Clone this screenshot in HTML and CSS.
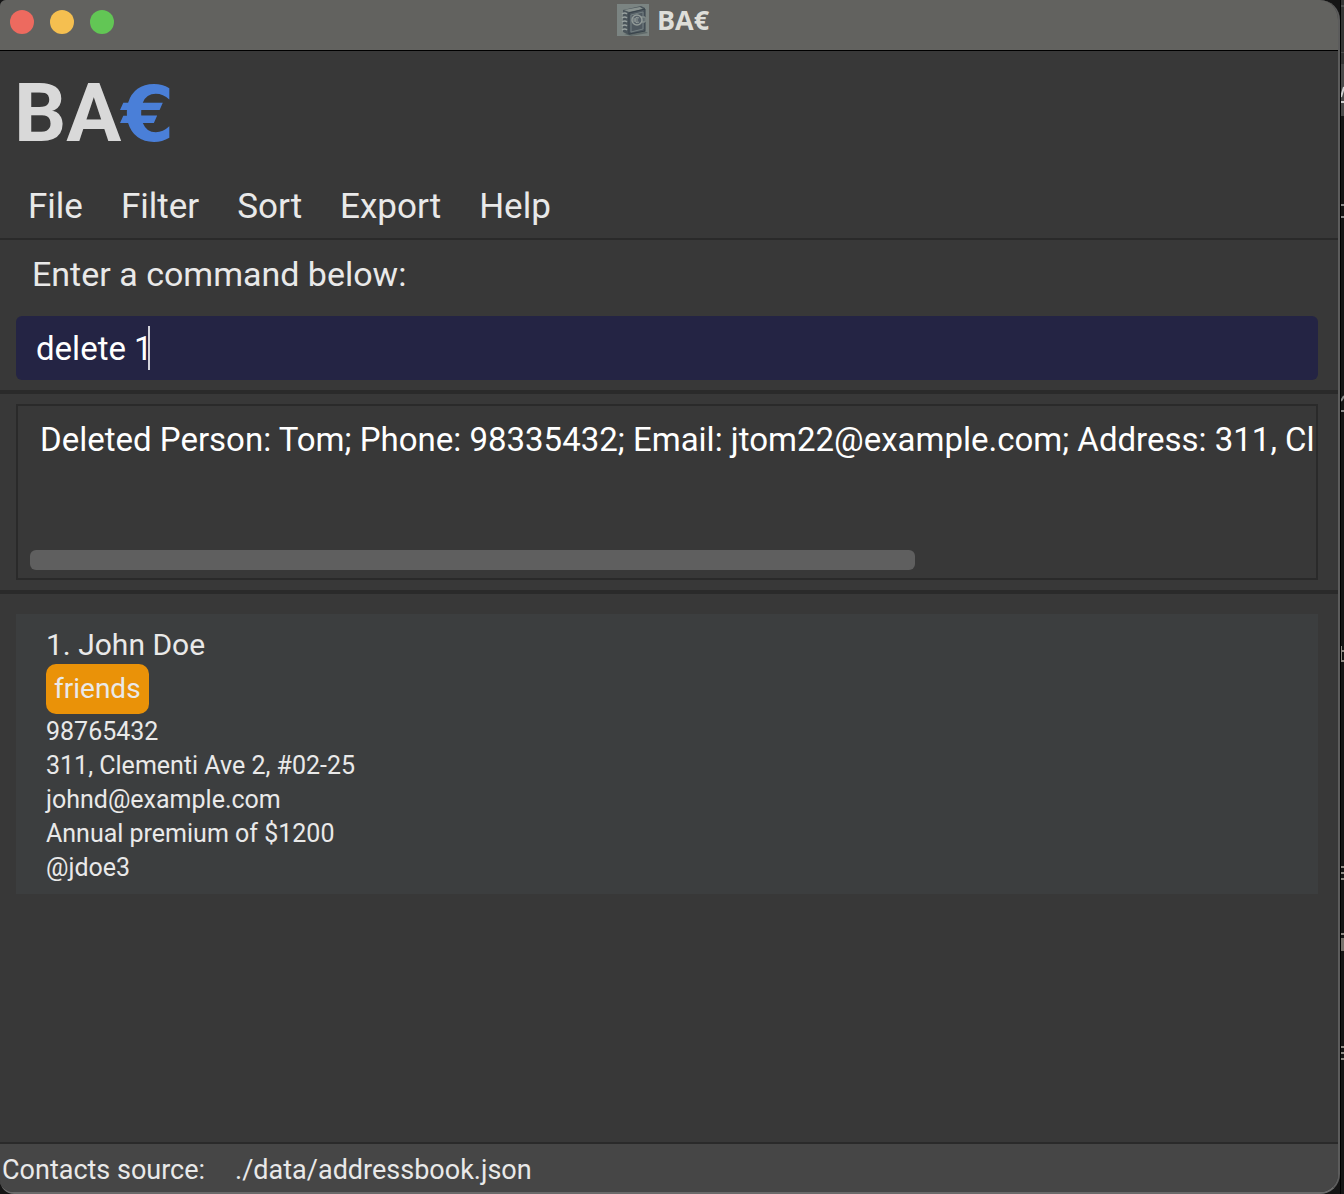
FILE: index.html
```html
<!DOCTYPE html>
<html lang="en">
<head>
<meta charset="utf-8">
<title>BA€</title>
<link rel="stylesheet" href="styles.css">
</head>
<body>
<div class="desktop">
  <div class="window">
    <header class="titlebar">
      <div class="lights">
        <button class="light close" aria-label="Close"></button>
        <button class="light minimise" aria-label="Minimise"></button>
        <button class="light zoom" aria-label="Zoom"></button>
      </div>
      <div class="title">
        <svg class="app-icon" viewBox="0 0 32 32" aria-hidden="true">
          <rect width="32" height="32" fill="#7b8482"/>
          <path d="M7 30 28 27 31 29 14 32Z" fill="#5f6969"/>
          <path d="M6 6 24 2 28 4V27L12 31 6 28Z" fill="#4b555b"/>
          <path d="M7 6 23 3 26 5 12 8Z" fill="#89928f"/>
          <path d="M12 9 28 5V27L12 30Z" fill="#4f5960" stroke="#38434a"/>
          <path d="M14 11 26 8V25L14 28Z" fill="none" stroke="#748082"/>
          <circle cx="20" cy="16" r="5" fill="#566068" stroke="#929b98" stroke-width="1.500"/>
          <path d="M22 14Q18 12 18 16T22 18M16 15H21M16 17H21M24 13H28V18H25" fill="none" stroke="#929b98"/>
          <path d="M5 10Q8 8 10 10M5 14Q8 12 10 14M5 18Q8 16 10 18M5 22Q8 20 10 22M5 26Q8 24 10 26" fill="none" stroke="#98a19f" stroke-width="1.500"/>
        </svg>
        <span>BA€</span>
      </div>
    </header>
    <h1 class="logo">BA<span class="euro">€</span></h1>
    <nav class="menu">
      <button>File</button>
      <button>Filter</button>
      <button>Sort</button>
      <button>Export</button>
      <button>Help</button>
    </nav>
    <section class="command">
      <label for="command">Enter a command below:</label>
      <div class="field">
        <input id="command" type="text" value="delete 1" autocomplete="off" spellcheck="false">
        <span class="caret"></span>
      </div>
    </section>
    <section class="result">
      <div class="result-box">
        <output class="message" for="command">Deleted Person: Tom; Phone: 98335432; Email: jtom22@example.com; Address: 311, Cl</output>
        <div class="track"><div class="thumb"></div></div>
      </div>
    </section>
    <main class="people">
      <article class="card">
        <h2>1. John Doe</h2>
        <span class="tag">friends</span>
        <p>98765432</p>
        <p>311, Clementi Ave 2, #02-25</p>
        <p>johnd@example.com</p>
        <p>Annual premium of $1200</p>
        <p>@jdoe3</p>
      </article>
    </main>
    <footer class="status"><span>Contacts source:</span><span>./data/addressbook.json</span></footer>
  </div>
  <svg class="behind" viewBox="0 0 4 1194" preserveAspectRatio="none" aria-hidden="true">
    <rect width="4" height="1194" fill="#151515"/>
    <rect width="4" height="64" fill="#353535"/>
    <rect y="5" width="4" height="2" fill="#505050"/>
    <rect y="52" width="4" height="1" fill="#505050"/>
    <rect y="64" width="4" height="52" fill="#4a4a4a"/>
    <path d="M1 97 4 87M1 102H4" stroke="#d0d0d0" stroke-width="2"/>
    <path d="M1 205H4M1 217H4M1 401 4 396M1 411H4" stroke="#8a8a8a" stroke-width="2"/>
    <path d="M1 646V662M1 651H4M1 661H4M1 867H4M1 873H4M1 879H4M1 934H4M1 1047H4M1 1053H4M1 1059H4" stroke="#8f8a84" stroke-width="2"/>
    <rect y="938" x="1" width="3" height="13" fill="#77726c"/>
    <rect width="1" height="1194" fill="#000"/>
  </svg>
</div>
</body>
</html>
```
FILE: styles.css
```css
* { box-sizing: border-box; }

body {
  margin: 0;
  background: #151515;
  color: #e9e9e9;
  font-family: Roboto, "Liberation Sans", sans-serif;
}

button, input { font: inherit; color: inherit; border: 0; padding: 0; }
button { background: none; }
h1, h2, p { margin: 0; font-weight: 400; }

.desktop { display: flex; min-height: 100vh; }
.behind { width: 4px; height: 100vh; flex: none; }

.window {
  flex: 1;
  min-width: 0;
  display: flex;
  flex-direction: column;
  background: #383838;
  border-right: 2px solid #5c5c5c;
  border-bottom: 2px solid #6a6a6a;
  border-radius: 6px 20px 20px 14px;
  overflow: hidden;
}

.titlebar {
  display: grid;
  grid-template-columns: 1fr auto 1fr;
  height: 51px;
  padding-right: 12px;
  background: #62625f;
  border-bottom: 1px solid #000;
}
.lights { display: flex; gap: 16px; padding: 10px; }
.light { width: 24px; height: 24px; border-radius: 50%; }
.close { background: #ed6a5f; }
.minimise { background: #f5bf50; }
.zoom { background: #62c655; }
.title {
  display: flex;
  gap: 8px;
  padding-top: 4px;
  font: 700 27px/32px "Open Sans", sans-serif;
  color: #deded9;
}
.app-icon { width: 32px; height: 32px; }

.logo {
  display: flex;
  align-items: baseline;
  height: 108px;
  padding: 14px 14px 0;
  font-weight: 700;
  font-size: 82px;
  line-height: 96px;
  color: #d9d9d9;
}
.euro {
  color: #4a7fd8;
  font-family: "DejaVu Sans", sans-serif;
  font-size: 76px;
}

.menu {
  display: flex;
  gap: 38px;
  margin-top: 15px;
  padding: 9px 28px 7px;
  border-bottom: 2px solid #2a2a2a;
  font-size: 35px;
  line-height: 48px;
}

.command {
  padding: 10px 20px 10px 16px;
  border-bottom: 4px solid #2a2a2a;
}
.command label {
  display: block;
  padding: 0 16px 18px;
  font-size: 34px;
  line-height: 48px;
}
.field { position: relative; }
.field input {
  display: block;
  width: 100%;
  height: 64px;
  padding: 0 20px;
  border-radius: 6px;
  background: #242444;
  color: #fff;
  font-size: 33px;
  caret-color: transparent;
}
.caret {
  position: absolute;
  left: 132px;
  top: 10px;
  width: 2px;
  height: 44px;
  background: #d3d3da;
}

.result { padding: 10px 20px 10px 16px; border-bottom: 4px solid #2a2a2a; }
.result-box {
  display: flex;
  flex-direction: column;
  height: 176px;
  padding: 12px 0 8px 12px;
  border: 2px solid #2a2a2a;
}
.message {
  flex: 1;
  padding-left: 10px;
  overflow: hidden;
  white-space: nowrap;
  color: #fff;
  font-size: 33px;
  line-height: 44px;
}
.track { padding-right: 4px; }
.thumb { width: 69%; height: 20px; border-radius: 6px; background: #5f5f5f; }

.people { flex: 1; padding: 20px 20px 20px 16px; }
.card { padding: 11px 30px 9px; background: #3c3e3f; }
.card h2 { font-size: 30px; line-height: 39px; }
.tag {
  display: block;
  width: fit-content;
  margin-bottom: 1px;
  padding: 0 8px;
  border-radius: 10px;
  background: #ea9208;
  font-size: 28px;
  line-height: 50px;
}
.card p { font-size: 25px; line-height: 34px; }

.status {
  display: flex;
  gap: 30px;
  padding: 4px 2px 0;
  border-top: 2px solid #2a2a2a;
  background: #464646;
  font-size: 27px;
  line-height: 44px;
}
```
